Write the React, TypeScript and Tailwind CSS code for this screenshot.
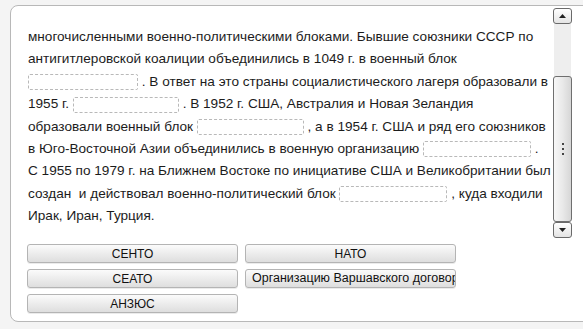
import React from "react";

const Blank = ({ w = 108 }: { w?: number }) => (
  <span
    className="inline-block h-[16px] align-middle border border-dashed border-[#b9b9b9] rounded-[2px] bg-white"
    style={{ width: w }}
  />
);

const Btn = ({ children }: { children: React.ReactNode }) => (
  <div className="h-[19px] rounded-[3px] border border-[#b4b4b4] bg-gradient-to-b from-[#fbfbfb] to-[#dedede] flex items-center justify-center overflow-hidden whitespace-nowrap text-[12px] text-[#111] shadow-[0_1px_0_rgba(0,0,0,0.08)]">
    {children}
  </div>
);

export default function App() {
  return (
    <div
      className="w-[583px] h-[329px] overflow-hidden bg-[#f4f4f4] pt-[5px] pl-[10px]"
      style={{ fontFamily: '"Liberation Sans", Arial, sans-serif' }}
    >
      <div className="w-[600px] h-[317px] rounded-[8px] border border-[#b8b8b8] bg-white">
        <div className="flex pt-[1px]">
          <div className="w-[542px] pl-[17px] pt-[19px] text-[13.6px] leading-[22.4px] text-[#1c1c1c] whitespace-nowrap">
            <div>многочисленными военно-политическими блоками. Бывшие союзники СССР по</div>
            <div>антигитлеровской коалиции объединились в 1049 г. в военный блок</div>
            <div>
              <Blank w={110} /> . В ответ на это страны социалистического лагеря образовали в
            </div>
            <div>
              1955 г. <Blank w={106} /> . В 1952 г. США, Австралия и Новая Зеландия
            </div>
            <div>
              образовали военный блок <Blank w={107} /> , а в 1954 г. США и ряд его союзников
            </div>
            <div>
              в Юго-Восточной Азии объединились в военную организацию <Blank w={108} /> .
            </div>
            <div>С 1955 по 1979 г. на Ближнем Востоке по инициативе США и Великобритании был</div>
            <div>
              создан&nbsp; и действовал военно-политический блок <Blank w={108} /> , куда входили
            </div>
            <div>Ирак, Иран, Турция.</div>
          </div>
          <div className="w-[19px] h-[230px] mt-[1px] flex flex-col">
            <div className="h-[16px] rounded-[3px] border border-[#6a6a6a] bg-gradient-to-b from-white to-[#e4e4e4] flex items-center justify-center">
              <svg width="7" height="4" viewBox="0 0 7 4">
                <path d="M0 4 L3.5 0 L7 4 Z" fill="#222" />
              </svg>
            </div>
            <div className="flex-1 flex flex-col bg-[#eeeeee] mx-[1px]">
              <div className="h-[52px]" />
              <div className="flex-1 -mx-[1px] rounded-[3px] border border-[#6f6f6f] bg-gradient-to-r from-[#f7f7f7] via-[#e9e9e9] to-[#d6d6d6] flex flex-col items-center justify-center gap-[3px]">
                <span className="w-[2px] h-[2px] bg-[#444]" />
                <span className="w-[2px] h-[2px] bg-[#444]" />
                <span className="w-[2px] h-[2px] bg-[#444]" />
              </div>
            </div>
            <div className="h-[16px] rounded-[3px] border border-[#6a6a6a] bg-gradient-to-b from-white to-[#e4e4e4] flex items-center justify-center">
              <svg width="7" height="4" viewBox="0 0 7 4">
                <path d="M0 0 L7 0 L3.5 4 Z" fill="#222" />
              </svg>
            </div>
          </div>
        </div>
        <div className="mt-[6px] ml-[16px] w-[429px] grid grid-cols-2 gap-x-[7px] gap-y-[6px]">
          <Btn>СЕНТО</Btn>
          <Btn>НАТО</Btn>
          <Btn>СЕАТО</Btn>
          <Btn>
            <span className="block w-full text-left pl-[6px] text-[12.5px]">Организацию Варшавского договора</span>
          </Btn>
          <Btn>АНЗЮС</Btn>
        </div>
      </div>
    </div>
  );
}
